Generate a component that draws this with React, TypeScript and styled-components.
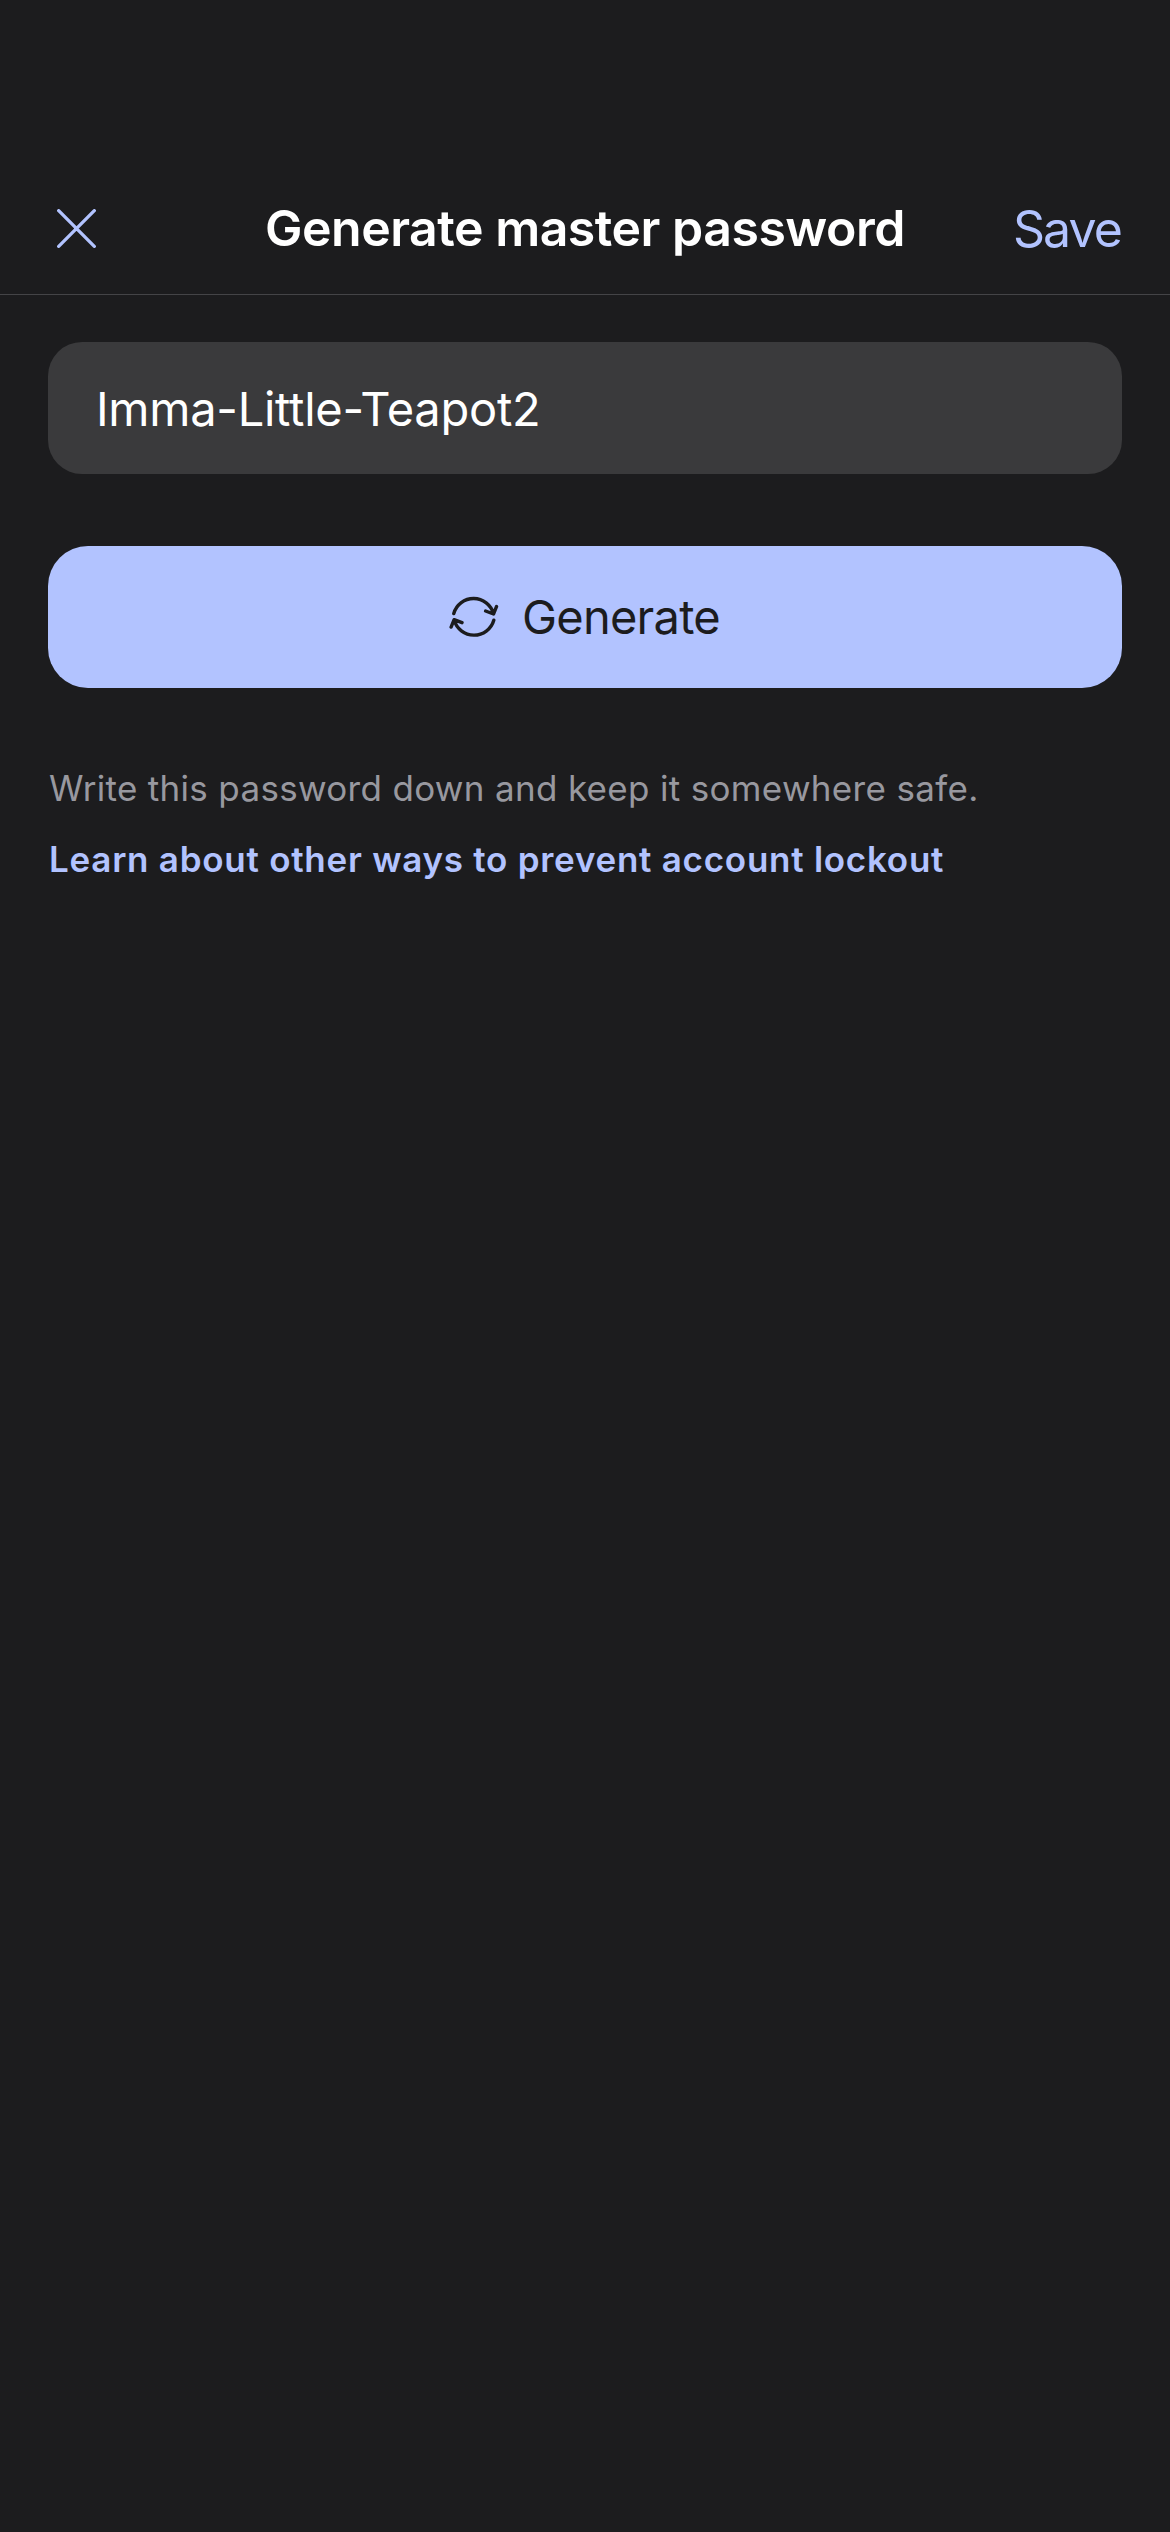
import React from "react";
import styled, { createGlobalStyle } from "styled-components";

const Global = createGlobalStyle`
  * { box-sizing: border-box; }
  body { margin: 0; background: #1c1c1e; }
`;

const Screen = styled.main`
  min-height: 2532px;
  width: 1170px;
  background: #1c1c1e;
  font-family: Inter, "Liberation Sans", sans-serif;
  color: #fff;
`;

const Header = styled.header`
  height: 295px;
  padding: 162px 48px 0;
  display: grid;
  grid-template-columns: 200px 1fr 200px;
  align-items: center;
  border-bottom: 1px solid #444447;
`;

const IconButton = styled.button`
  border: 0;
  padding: 0 0 0 9px;
  background: none;
  display: flex;
`;

const Title = styled.h1`
  margin: 0;
  text-align: center;
  white-space: nowrap;
  font-size: 50px;
  line-height: 60px;
  font-weight: 600;
  letter-spacing: -0.5px;
`;

const SaveButton = styled.button`
  border: 0;
  padding: 2px 1px 0 0;
  background: none;
  text-align: right;
  font: 400 50px/60px Inter, "Liberation Sans", sans-serif;
  letter-spacing: -1.9px;
  color: #b2c3ff;
`;

const Content = styled.section`
  padding: 47px 48px 0;
  display: flex;
  flex-direction: column;
`;

const PasswordField = styled.div`
  height: 132px;
  border-radius: 34px;
  background: #3a3a3c;
  padding: 0 48px;
  display: flex;
  align-items: center;
  font-size: 47px;
  letter-spacing: -0.26px;
`;

const GenerateButton = styled.button`
  margin-top: 72px;
  height: 142px;
  border: 0;
  padding: 0 1px 0 0;
  border-radius: 40px;
  background: #b2c3ff;
  color: #1c1c1e;
  display: flex;
  align-items: center;
  justify-content: center;
  gap: 23px;
  font: 400 47px/56px Inter, "Liberation Sans", sans-serif;
  letter-spacing: -0.75px;
`;

const Note = styled.p`
  margin: 76px 0 0 1px;
  font-size: 35px;
  line-height: 48px;
  letter-spacing: 0.32px;
  color: #98989f;
`;

const Link = styled.a`
  margin: 23px 0 0 1px;
  font-size: 35px;
  line-height: 48px;
  font-weight: 600;
  letter-spacing: 0.74px;
  color: #b2c3ff;
`;

export default function App() {
  return (
    <Screen>
      <Global />
      <Header>
        <IconButton aria-label="Close">
          <svg width="39" height="39" viewBox="0 0 39 39" fill="none" stroke="#b2c3ff" strokeWidth="3.3" strokeLinecap="round">
            <path d="M1.7 1.7L37.3 37.3M37.3 1.7L1.7 37.3" />
          </svg>
        </IconButton>
        <Title>Generate master password</Title>
        <SaveButton>Save</SaveButton>
      </Header>
      <Content>
        <PasswordField>Imma-Little-Teapot2</PasswordField>
        <GenerateButton>
          <svg width="50" height="44" viewBox="0 0 50 44" fill="none" stroke="#1c1c1e" strokeWidth="3.4" strokeLinecap="round" strokeLinejoin="round">
            <path d="M4.8 18.5A20.6 20.6 0 0 1 44.5 18.8M36.6 16L44.5 19L47.5 11.6M44.8 25.2A20.6 20.6 0 0 1 5.1 24.9M13 27.7L5.1 24.7L2.1 32.1" />
          </svg>
          Generate
        </GenerateButton>
        <Note>Write this password down and keep it somewhere safe.</Note>
        <Link>Learn about other ways to prevent account lockout</Link>
      </Content>
    </Screen>
  );
}
